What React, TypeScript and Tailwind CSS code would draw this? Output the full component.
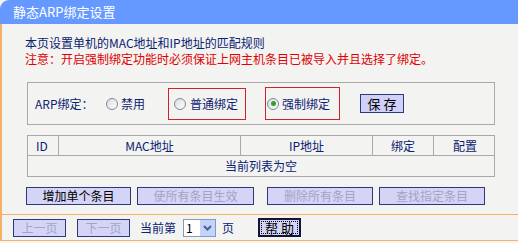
const font = "font-['SimSun','Noto_Sans_CJK_SC',sans-serif]";

function Radio({ checked }: { checked?: boolean }) {
  return (
    <span className="relative inline-flex h-[12px] w-[12px] items-center justify-center rounded-full border border-[#7a8a99] bg-gradient-to-br from-[#dcdcdc] to-white">
      {checked && <span className="h-[5px] w-[5px] rounded-full bg-[#2fa12f]" />}
    </span>
  );
}

function Btn({ label, disabled, w }: { label: string; disabled?: boolean; w: string }) {
  return (
    <button
      className={`${w} h-[18px] border border-[#2c3a7a] bg-[#d4d4f6] text-[12px] leading-[16px] ${
        disabled ? 'text-[#a3a3c4]' : 'text-black'
      }`}
    >
      {label}
    </button>
  );
}

export default function App() {
  return (
    <div className={`w-[518px] h-[243px] overflow-hidden bg-[#f3f3f2] ${font}`}>
      <div className="h-[24px] rounded-tl-[9px] bg-[#6699ff] pl-[13px] text-[13px] leading-[24px] text-white">
        静态ARP绑定设置
      </div>

      <div className="h-[190px] border-l-2 border-[#f4b266] pl-[23px] pt-[11px]">
        <div className="text-[12px] leading-[16px] text-[#0a2270]">本页设置单机的MAC地址和IP地址的匹配规则</div>
        <div className="text-[12px] leading-[16px] text-[#e00000]">注意：开启强制绑定功能时必须保证上网主机条目已被导入并且选择了绑定。</div>

        <div className="mt-[15px] ml-[2px] flex h-[43px] w-[468px] items-center border border-[#a9a9a9] pl-[7px] text-[12px] text-[#0a2270]">
          <span className="w-[71px]">ARP绑定：</span>
          <span className="flex items-center gap-[3px]">
            <Radio />
            禁用
          </span>
          <span className="ml-[23px] flex h-[32px] w-[78px] items-center gap-[4px] border border-[#d0202a] pl-[5px]">
            <Radio />
            普通绑定
          </span>
          <span className="ml-[19px] flex h-[33px] w-[75px] items-center gap-[3px] border border-[#d0202a] pl-[1px]">
            <Radio checked />
            强制绑定
          </span>
          <button className="ml-[20px] h-[19px] w-[44px] border border-[#2c3a7a] bg-[#d0d0f8] text-[13px] leading-[17px] text-black">
            保 存
          </button>
        </div>

        <div className="mt-[10px] ml-[2px] w-[468px] text-[12px] text-[#0a2270]">
          <div className="grid h-[21px] grid-cols-[31px_182px_132px_61px_62px] border border-[#a9a9a9] leading-[19px] text-center">
            <div className="border-r border-[#a9a9a9] text-left pl-[8px]">ID</div>
            <div className="border-r border-[#a9a9a9]">MAC地址</div>
            <div className="border-r border-[#a9a9a9]">IP地址</div>
            <div className="border-r border-[#a9a9a9]">绑定</div>
            <div>配置</div>
          </div>
          <div className="h-[21px] border border-t-0 border-[#a9a9a9] text-center leading-[20px]">当前列表为空</div>
        </div>

        <div className="mt-[10px] ml-[1px] flex">
          <Btn label="增加单个条目" w="w-[105px]" />
          <span className="w-[6px]" />
          <Btn label="使所有条目生效" disabled w="w-[117px]" />
          <span className="w-[13px]" />
          <Btn label="删除所有条目" disabled w="w-[106px]" />
          <span className="w-[6px]" />
          <Btn label="查找指定条目" disabled w="w-[106px]" />
        </div>
      </div>

      <div className="flex h-[27px] items-center border-y border-l-2 border-[#f4b266] pl-[11px] text-[12px] text-[#0a2270]">
        <Btn label="上一页" disabled w="w-[53px]" />
        <span className="w-[11px]" />
        <Btn label="下一页" disabled w="w-[53px]" />
        <span className="ml-[10px]">当前第</span>
        <span className="ml-[7px] flex h-[18px] w-[33px] items-center justify-between border border-[#7f9db9] bg-white pl-[2px] text-black">
          1
          <span className="flex h-[16px] w-[15px] items-center justify-center bg-[#c3d3fd]">
            <svg width="9" height="6" viewBox="0 0 9 6">
              <path d="M1 1 L4.5 4.5 L8 1" stroke="#4d6185" strokeWidth="2" fill="none" />
            </svg>
          </span>
        </span>
        <span className="ml-[6px]">页</span>
        <button className="ml-[24px] h-[19px] w-[43px] border-2 border-[#10163a] bg-[#d4d4f6] text-[13px] leading-[15px] text-black outline-1 outline-dotted outline-offset-[-4px] outline-black">
          帮 助
        </button>
      </div>
    </div>
  );
}
